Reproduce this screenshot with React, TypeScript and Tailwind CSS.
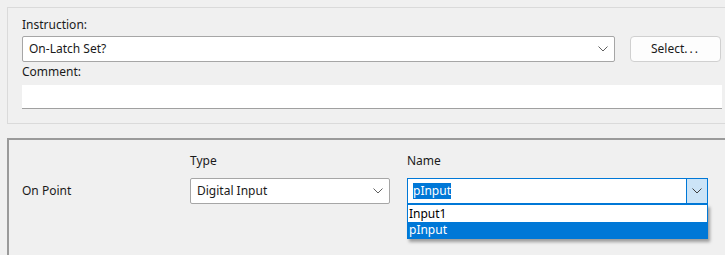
import React from "react";

const Chevron = ({ color = "#606060" }: { color?: string }) => (
  <svg width="10" height="6" viewBox="0 0 10 6" fill="none">
    <path d="M0.5 0.5 L5 5 L9.5 0.5" stroke={color} strokeWidth="1" />
  </svg>
);

export default function App() {
  return (
    <div
      className="w-[725px] h-[255px] overflow-hidden bg-[#f0f0f0] text-[12px] text-[#1a1a1a] pl-[7px] pt-[7px] flex flex-col"
      style={{ fontFamily: '"Noto Sans", "Open Sans", sans-serif' }}
    >
      {/* Top group */}
      <div className="h-[117px] border-t border-l border-b border-[#dadada] pl-[14px] flex flex-col shrink-0">
        <div className="mt-[9px] h-[16px] leading-[16px]">Instruction:</div>
        <div className="mt-[3px] flex items-center">
          <div className="w-[593px] h-[26px] bg-white border border-[#a6a6a6] rounded-[2px] flex items-center pl-[6px] pr-[6px] justify-between">
            <span>On-Latch Set?</span>
            <Chevron />
          </div>
          <div className="ml-[15px] w-[91px] h-[26px] bg-[#fdfdfd] border border-[#d0d0d0] rounded-[4px] flex items-center justify-center">
            <span>
              Select<span className="tracking-[2px]">...</span>
            </span>
          </div>
        </div>
        <div className="mt-[2px] h-[16px] leading-[16px]">Comment:</div>
        <div className="mt-[5px] w-[700px] h-[24px] bg-white border-b border-[#a0a0a0]" />
      </div>

      {/* Bottom group */}
      <div className="mt-[14px] flex-1 border-t-2 border-l-2 border-[#9a9a9a] pl-[13px] flex flex-col">
        <div className="flex mt-[13px] h-[16px] leading-[16px]">
          <div className="w-[168px]" />
          <div className="w-[217px]">Type</div>
          <div>Name</div>
        </div>
        <div className="flex mt-[9px] items-start">
          <div className="w-[168px] h-[26px] flex items-center">On Point</div>
          <div className="w-[200px] h-[26px] bg-white border border-[#a6a6a6] rounded-[2px] flex items-center justify-between pl-[6px] pr-[6px]">
            <span>Digital Input</span>
            <Chevron />
          </div>
          <div className="ml-[17px] w-[301px] relative">
            <div className="h-[26px] bg-white border border-[#0078d7] flex items-stretch">
              <div className="flex-1 flex items-center pl-[5px]">
                <span className="bg-[#0078d7] text-white leading-[16px]">pInput</span>
              </div>
              <div className="w-[21px] bg-[#cce4f7] border-l border-[#0078d7] flex items-center justify-center">
                <Chevron color="#404040" />
              </div>
            </div>
            <div className="absolute left-0 top-[26px] w-[301px] bg-white border border-[#0078d7] shadow-[2px_3px_3px_rgba(0,0,0,0.35)]">
              <div className="h-[17px] leading-[17px] pl-[1px] text-black bg-white">Input1</div>
              <div className="h-[16px] leading-[16px] pl-[1px] text-white bg-[#0078d7]">pInput</div>
            </div>
          </div>
        </div>
      </div>
    </div>
  );
}
